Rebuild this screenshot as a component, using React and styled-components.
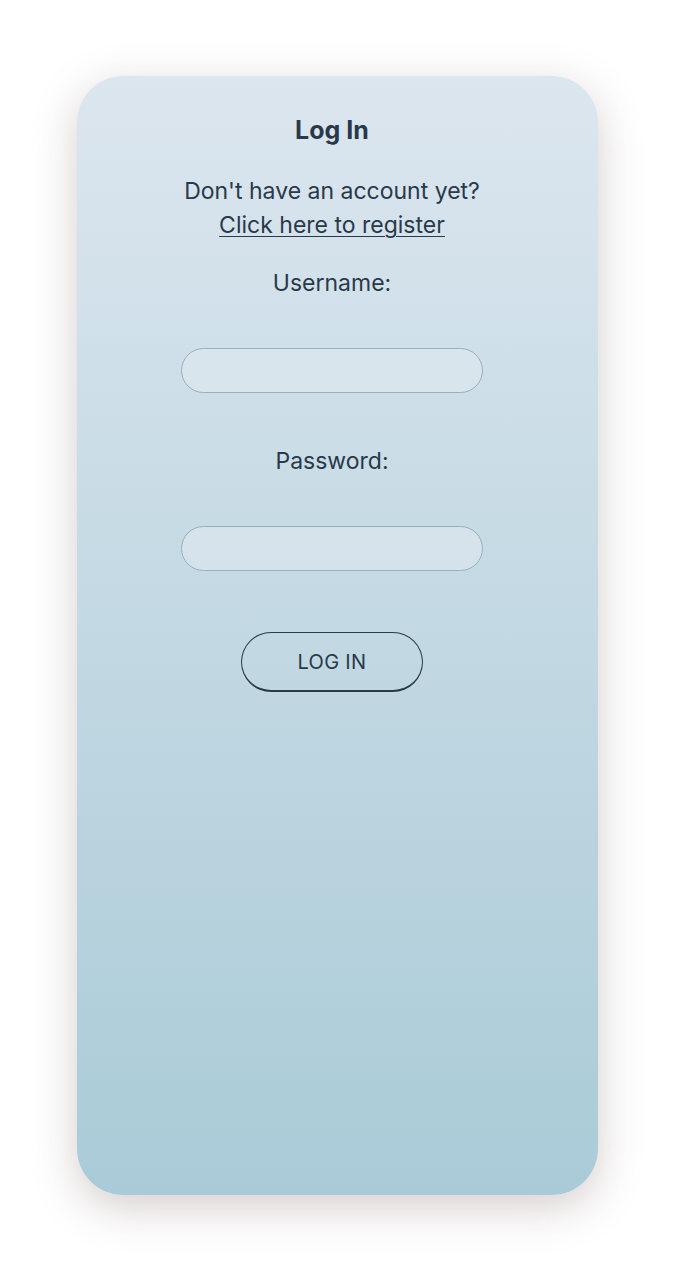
import React from "react";
import styled, { createGlobalStyle } from "styled-components";

const Global = createGlobalStyle`
  html, body { margin: 0; padding: 0; background: #ffffff; }
  body { font-family: Inter, "Noto Sans", sans-serif; }
`;

const Page = styled.div`
  padding: 76px 75px 77px 77px;
`;

const Card = styled.div`
  height: 1119px;
  box-sizing: border-box;
  border-radius: 46px;
  background: linear-gradient(180deg, #dce6ef 0%, #a9cbd7 100%);
  box-shadow: 0 12px 44px rgba(95, 60, 60, 0.26);
  display: flex;
  flex-direction: column;
  align-items: center;
  padding: 0 11px 0 0;
  color: #29394a;
`;

const Title = styled.h1`
  margin: 39px 0 0;
  font-size: 25px;
  font-weight: 700;
  line-height: 30px;
`;

const Prompt = styled.p`
  margin: 29px 0 0;
  font-size: 23px;
  line-height: 34px;
  text-align: center;
`;

const Link = styled.a`
  color: #29394a;
  text-decoration: underline;
  text-underline-offset: 3px;
  text-decoration-thickness: 1px;
`;

const Label = styled.label`
  margin-top: ${(p) => p.$top}px;
  font-size: 23px;
  line-height: 28px;
`;

const Input = styled.input`
  margin-top: 51px;
  width: 302px;
  height: 45px;
  box-sizing: border-box;
  border-radius: 23px;
  border: 1px solid #98afbd;
  background: rgba(225, 234, 241, 0.55);
  outline: none;
`;

const Button = styled.button`
  margin-top: 61px;
  width: 182px;
  height: 60px;
  box-sizing: border-box;
  border-radius: 30px;
  border: 1px solid #2b3a4a;
  border-bottom-width: 2px;
  background: transparent;
  color: #29394a;
  font-family: Inter, "Noto Sans", sans-serif;
  font-size: 20px;
  letter-spacing: 0.3px;
`;

export default function App() {
  return (
    <>
      <Global />
      <Page>
        <Card>
          <Title>Log In</Title>
          <Prompt>
            Don't have an account yet?
            <br />
            <Link href="#">Click here to register</Link>
          </Prompt>
          <Label $top={27}>Username:</Label>
          <Input type="text" />
          <Label $top={54}>Password:</Label>
          <Input type="password" />
          <Button>LOG IN</Button>
        </Card>
      </Page>
    </>
  );
}
